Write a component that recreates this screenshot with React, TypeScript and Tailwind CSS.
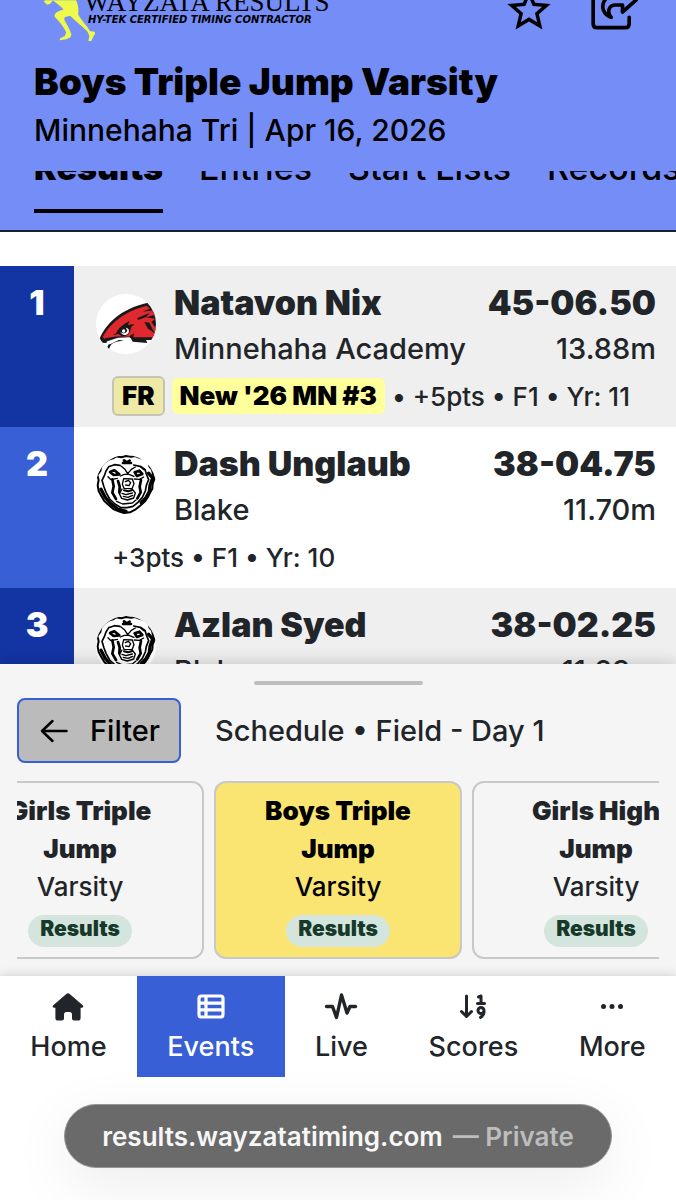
import { ReactNode, useState } from 'react'
import { MdStarBorder } from 'react-icons/md'
import clsx from 'clsx'

interface Result {
    place: number;
    name: string;
    team: string;
    mark: string;
    metric: string;
    grade?: string;
    note?: string;
    details?: string;
    logo: ReactNode;
}

const Runner = () => (
    <svg viewBox="130 0 160 126" className="h-[42px] w-[53px] shrink-0" fill="#eefa4b" aria-hidden="true">
        <path d="M132 4 136 0H160L152 11 143 14Z" />
        <path d="M158 0H230C236 14 239 28 236 42C242 58 262 75 272 94L284 95 288 99 281 112 276 123 267 123 270 108 264 95C245 76 225 60 212 47L200 50C192 52 193 58 199 68C207 80 212 92 216 104L212 113 200 118 180 121 182 115 196 108 200 97C192 80 180 65 165 50C163 38 175 33 192 28C185 20 172 8 158 0Z" />
    </svg>
)

const ShareIcon = () => (
    <svg viewBox="768 0 140 90" className="h-[30px] w-[47px]" fill="none" stroke="black" strokeWidth="11" strokeLinecap="round" strokeLinejoin="round" aria-hidden="true">
        <path d="M774-10V71Q774 83 786 83H870Q882 83 882 71V52" />
        <path d="M912-8 862 36V15H842C818 15 816 38 828 52C806 44 796 22 808 2Q812-6 822-10" />
    </svg>
)

const CardinalLogo = () => (
    <svg viewBox="0 0 180 180" className="mt-[14px] size-[60px] shrink-0 rounded-full bg-white" aria-hidden="true">
        <path fill="#191919" d="M11 134C28 92 72 44 156 26L165 36 180 54V138H150L154 147 110 143 104 132 72 142C50 144 42 152 39 168L34 158 40 148 18 146Z" />
        <path fill="#e0292f" d="M20 129C40 92 82 52 152 35L162 44 139 53 175 49 178 62 150 70 178 74 166 84 177 99 178 130H112L114 118 98 128C70 124 45 128 24 134Z" />
        <path fill="#191919" d="M60 118C66 102 82 91 101 80L96 93 115 90 104 101C105 116 94 128 77 126L67 120 50 124ZM124 72 162 56 150 69 126 78ZM145 84 160 86 176 118 156 104Z" />
        <path fill="white" d="M72 112C79 121 92 120 94 109L89 101C99 102 101 111 97 118C89 127 77 124 72 112ZM34 142 66 131 101 130C104 133 103 138 98 140L68 138 44 150C34 153 28 147 34 142Z" />
        <circle cx="83" cy="111" r="5" fill="white" />
    </svg>
)

const BearLogo = () => (
    <svg viewBox="0 0 180 180" className="mt-[14px] size-[60px] shrink-0 rounded-full bg-white" fill="none" stroke="black" strokeLinecap="round" strokeLinejoin="round" aria-hidden="true">
        <path strokeWidth="6" d="M26 22 38 14 51 10 60 4 76 7 90 3 105 5 118 3 132 9 147 12 158 23 160 34 168 44 171 58 176 71 170 86 169 101 162 113 156 126 147 139 134 151 119 163 102 172 84 174 68 169 52 162 38 150 25 138 16 123 8 108 5 91 8 75 4 60 13 48 16 34Z" />
        <path strokeWidth="10" d="M158 55 170 69 162 91 160 110 150 128 136 143M15 103 27 126 43 145 65 162 90 169" />
        <path strokeWidth="5" d="M39 34 30 48 25 62 18 76 24 96 30 112 41 132 58 148 75 158 94 158 111 154 126 142 139 127 148 108 151 91 158 74 151 57 147 43 134 34M38 35 55 29 72 31M113 30 132 34 144 44" />
        <path strokeWidth="8" d="M84 16 92 22 101 17M81 24H105M42 51 55 46 70 58 53 60ZM116 52 130 47 139 57 123 63Z" />
        <path strokeWidth="8" d="M49 73 53 94 49 113 60 132M135 75 131 95 134 112 124 130M66 78 71 94 70 112" />
        <path strokeWidth="4" d="M75 33 87 43 95 56 106 43 118 36M73 63 85 58 99 58 114 64M36 65 45 74 64 70M115 72 130 73 143 66M83 71 79 88 84 100 108 101 114 86 109 72ZM88 80 97 76 104 83 99 92 89 90M78 102 70 116 77 130 94 135 113 129 118 114 110 104M78 115 90 119 109 114M82 124 96 127 110 121M62 139 80 147 109 144 120 135" />
        <path strokeWidth="6" d="M84 106 96 109 109 105" />
    </svg>
)

const HomeIcon = () => (
    <svg viewBox="0 0 32 30" className="h-[30px] w-8" fill="currentColor" aria-hidden="true">
        <path d="M14.6 1.8Q16 .6 17.4 1.8L31 13.4Q32 15.4 30 15.8H28.6V26Q28.6 28.6 26 28.6H22Q20 28.6 20 26.6V22.5Q20 20 17.5 20H14.5Q12 20 12 22.5V26.6Q12 28.6 10 28.6H6Q3.4 28.6 3.4 26V15.8H2Q0 15.4 1 13.4Z" />
    </svg>
)

const EventsIcon = () => (
    <svg viewBox="0 0 32 30" className="h-[30px] w-8" fill="none" stroke="currentColor" strokeWidth="3.2" aria-hidden="true">
        <rect x="4" y="4" width="24" height="21" rx="2.5" />
        <path d="M5 11.1H27M5 17.9H27M11 5V24" />
    </svg>
)

const LiveIcon = () => (
    <svg viewBox="0 0 34 30" className="h-[30px] w-[34px]" fill="none" stroke="currentColor" strokeWidth="3.4" strokeLinecap="round" strokeLinejoin="round" aria-hidden="true">
        <path d="M2.5 14.5H8.5L12.5 25.5 17.5 3 23 21 26 14.5H31.5" />
    </svg>
)

const ScoresIcon = () => (
    <svg viewBox="0 0 32 30" className="h-[30px] w-8" fill="none" stroke="currentColor" strokeWidth="3" strokeLinecap="round" strokeLinejoin="round" aria-hidden="true">
        <path d="M9.5 4V24M4.5 19.5 9.5 24.5 14.5 19.5" />
        <path d="M21.5 5 24 4V11M20.5 11.5H27.5M27 20C27 22 26 24 23.5 25.5" />
        <circle cx="24" cy="18.5" r="3" />
    </svg>
)

const MoreIcon = () => (
    <svg viewBox="0 0 32 30" className="h-[30px] w-8" fill="currentColor" aria-hidden="true">
        <circle cx="7.5" cy="14.5" r="2.5" />
        <circle cx="16" cy="14.5" r="2.5" />
        <circle cx="24.5" cy="14.5" r="2.5" />
    </svg>
)

const tabs = ['Results', 'Entries', 'Start Lists', 'Records']

const results: Result[] = [
    { place: 1, name: 'Natavon Nix', team: 'Minnehaha Academy', mark: '45-06.50', metric: '13.88m', grade: 'FR', note: "New '26 MN #3", details: '• +5pts • F1 • Yr: 11', logo: <CardinalLogo /> },
    { place: 2, name: 'Dash Unglaub', team: 'Blake', mark: '38-04.75', metric: '11.70m', details: '+3pts • F1 • Yr: 10', logo: <BearLogo /> },
    { place: 3, name: 'Azlan Syed', team: 'Blake', mark: '38-02.25', metric: '11.63m', logo: <BearLogo /> },
]

const schedule = ['Girls Triple Jump', 'Boys Triple Jump', 'Girls High Jump']

const navItems = [
    { label: 'Home', icon: <HomeIcon /> },
    { label: 'Events', icon: <EventsIcon /> },
    { label: 'Live', icon: <LiveIcon /> },
    { label: 'Scores', icon: <ScoresIcon /> },
    { label: 'More', icon: <MoreIcon /> },
]

const ResultRows = ({ result }: { result: Result }) => {
    const odd = result.place % 2 === 1;

    return (
        <tbody className={odd ? 'bg-[#efefef]' : 'bg-white'}>
            <tr>
                <th rowSpan={result.details ? 2 : 1} scope="row" className={clsx('w-[74px] pt-[14px] align-top text-[34px] leading-[46px] font-black text-white', odd ? 'bg-[#1335a3]' : 'bg-[#385fd5]')}>
                    {result.place}
                </th>
                <td className="pt-[14px] pl-[22px]">
                    <div className="flex items-start gap-[18px]">
                        {result.logo}
                        <div className="whitespace-nowrap">
                            <div className="text-[34px] leading-[46px] font-black">{result.name}</div>
                            <div className="text-[29px] leading-[46px] font-medium">{result.team}</div>
                        </div>
                    </div>
                </td>
                <td className="pt-[14px] pr-5 text-right">
                    <div className="text-[34px] leading-[46px] font-black">{result.mark}</div>
                    <div className="text-[29px] leading-[46px] font-medium">{result.metric}</div>
                </td>
            </tr>
            {result.details && (
                <tr>
                    <td colSpan={2} className="pt-1 pr-5 pb-[11px] pl-[38px]">
                        <div className="flex h-10 items-center gap-[7px] text-[26px] font-medium whitespace-nowrap">
                            {result.grade && (
                                <span className="rounded-md border-2 border-[#c4c3b4] bg-[#eeeaa5] px-2 leading-9 font-black text-black">{result.grade}</span>
                            )}
                            {result.note && (
                                <span className="rounded-md bg-[#ffff9b] px-2 leading-9 font-black text-black">{result.note}</span>
                            )}
                            <span>{result.details}</span>
                        </div>
                    </td>
                </tr>
            )}
        </tbody>
    )
}

const App = () => {
    const [tab, setTab] = useState('Results');
    const [selected, setSelected] = useState('Boys Triple Jump');
    const [page, setPage] = useState('Events');

    return (
        <div className="flex h-screen flex-col overflow-hidden bg-white font-['Inter',sans-serif] text-[#212529]">
            <header className="shrink-0 border-b-2 border-[#1b2030] bg-[#758df6] text-black">
                <div className="flex h-[57px] items-start justify-between pr-[38px] pl-[43px]">
                    <div className="flex items-start">
                        <Runner />
                        <div className="-ml-3 flex h-[25px] flex-col justify-end whitespace-nowrap">
                            <div className="font-['Liberation_Serif',serif] text-[27px] leading-[26px]">WAYZATA RESULTS</div>
                            <div className="pl-1 font-['DejaVu_Sans',sans-serif] text-[10px] leading-[10px] font-bold italic">HY-TEK CERTIFIED TIMING CONTRACTOR</div>
                        </div>
                    </div>
                    <div className="flex items-start gap-9">
                        <button type="button" aria-label="Favorite" className="-mt-4"><MdStarBorder size={52} /></button>
                        <button type="button" aria-label="Share"><ShareIcon /></button>
                    </div>
                </div>
                <div className="px-[34px]">
                    <h1 className="text-[37px] leading-[50px] font-black">Boys Triple Jump Varsity</h1>
                    <p className="text-[30px] leading-[46px] font-medium">Minnehaha Tri | Apr 16, 2026</p>
                </div>
                <div className="mt-[18px] mb-[17px] flex h-[42px] items-end gap-9 overflow-hidden pl-[34px]">
                    {tabs.map((item) => (
                        <button
                            key={item}
                            type="button"
                            onClick={() => setTab(item)}
                            className={clsx('shrink-0 border-b-4 pb-[21px] text-[34px] leading-10', tab === item ? 'border-black font-black' : 'border-transparent font-medium')}
                        >
                            {item}
                        </button>
                    ))}
                </div>
            </header>

            <main className="min-h-0 flex-1 overflow-hidden pt-[34px]">
                <table className="w-full border-collapse">
                    {results.map((result) => (
                        <ResultRows key={result.place} result={result} />
                    ))}
                </table>
            </main>

            <section className="relative shrink-0 bg-[#f5f5f5] px-[17px] pt-[17px] pb-[17px] shadow-[0_0_16px_rgba(0,0,0,0.2)]">
                <div className="mx-auto h-1 w-[169px] rounded-full bg-[#bdbdbd]" />
                <div className="mt-[13px] flex items-center gap-[34px] text-[29px] font-medium">
                    <button type="button" className="flex h-[65px] items-center gap-[22px] rounded-lg border-2 border-[#385fd5] bg-[#bbb] pr-[19px] pl-[21px] text-black">
                        <svg viewBox="0 0 28 24" className="h-6 w-7" fill="none" stroke="currentColor" strokeWidth="2.5" strokeLinecap="round" strokeLinejoin="round" aria-hidden="true">
                            <path d="M26.5 12H2M12.5 2 2 12 12.5 22" />
                        </svg>
                        Filter
                    </button>
                    <span>Schedule • Field - Day 1</span>
                </div>
                <div className="mt-[18px] flex justify-center gap-[10px] overflow-hidden">
                    {schedule.map((event) => (
                        <button
                            key={event}
                            type="button"
                            onClick={() => setSelected(event)}
                            className={clsx('flex w-[248px] shrink-0 flex-col items-center rounded-xl border-2 border-[#c8c8c8] px-8 pt-[9px] pb-[10px] text-[26px] leading-[38px]', selected === event && 'bg-[#fae572] text-black')}
                        >
                            <span className="font-black">{event}</span>
                            <span className="font-medium">Varsity</span>
                            <span className="mt-[9px] rounded-full bg-[#d3e5dd] px-3 pb-1 text-[21px] leading-7 font-black text-[#16392a]">Results</span>
                        </button>
                    ))}
                </div>
            </section>

            <nav className="relative z-10 flex shrink-0 bg-white shadow-[0_-1px_10px_rgba(0,0,0,0.15)]">
                {navItems.map((item) => (
                    <a
                        key={item.label}
                        href="#"
                        onClick={() => setPage(item.label)}
                        className={clsx('flex flex-auto flex-col items-center gap-2 pt-4 pb-[13px] text-[27px] leading-[34px] font-medium', page === item.label && 'bg-[#385fd5] text-white')}
                    >
                        {item.icon}
                        {item.label}
                    </a>
                ))}
            </nav>

            <footer className="relative z-10 flex shrink-0 justify-center bg-white px-16 pt-[27px] pb-8">
                <div className="flex h-16 w-full items-center justify-center gap-[10px] rounded-full border border-[#969696] bg-[#6a6a6a] text-[26px] font-semibold whitespace-nowrap shadow-[0_16px_60px_rgba(0,0,0,0.08)]">
                    <span className="text-[#f7f7f7]">results.wayzatatiming.com</span>
                    <span className="text-[#bdbdbd]">— Private</span>
                </div>
            </footer>
        </div>
    )
}

export default App;
